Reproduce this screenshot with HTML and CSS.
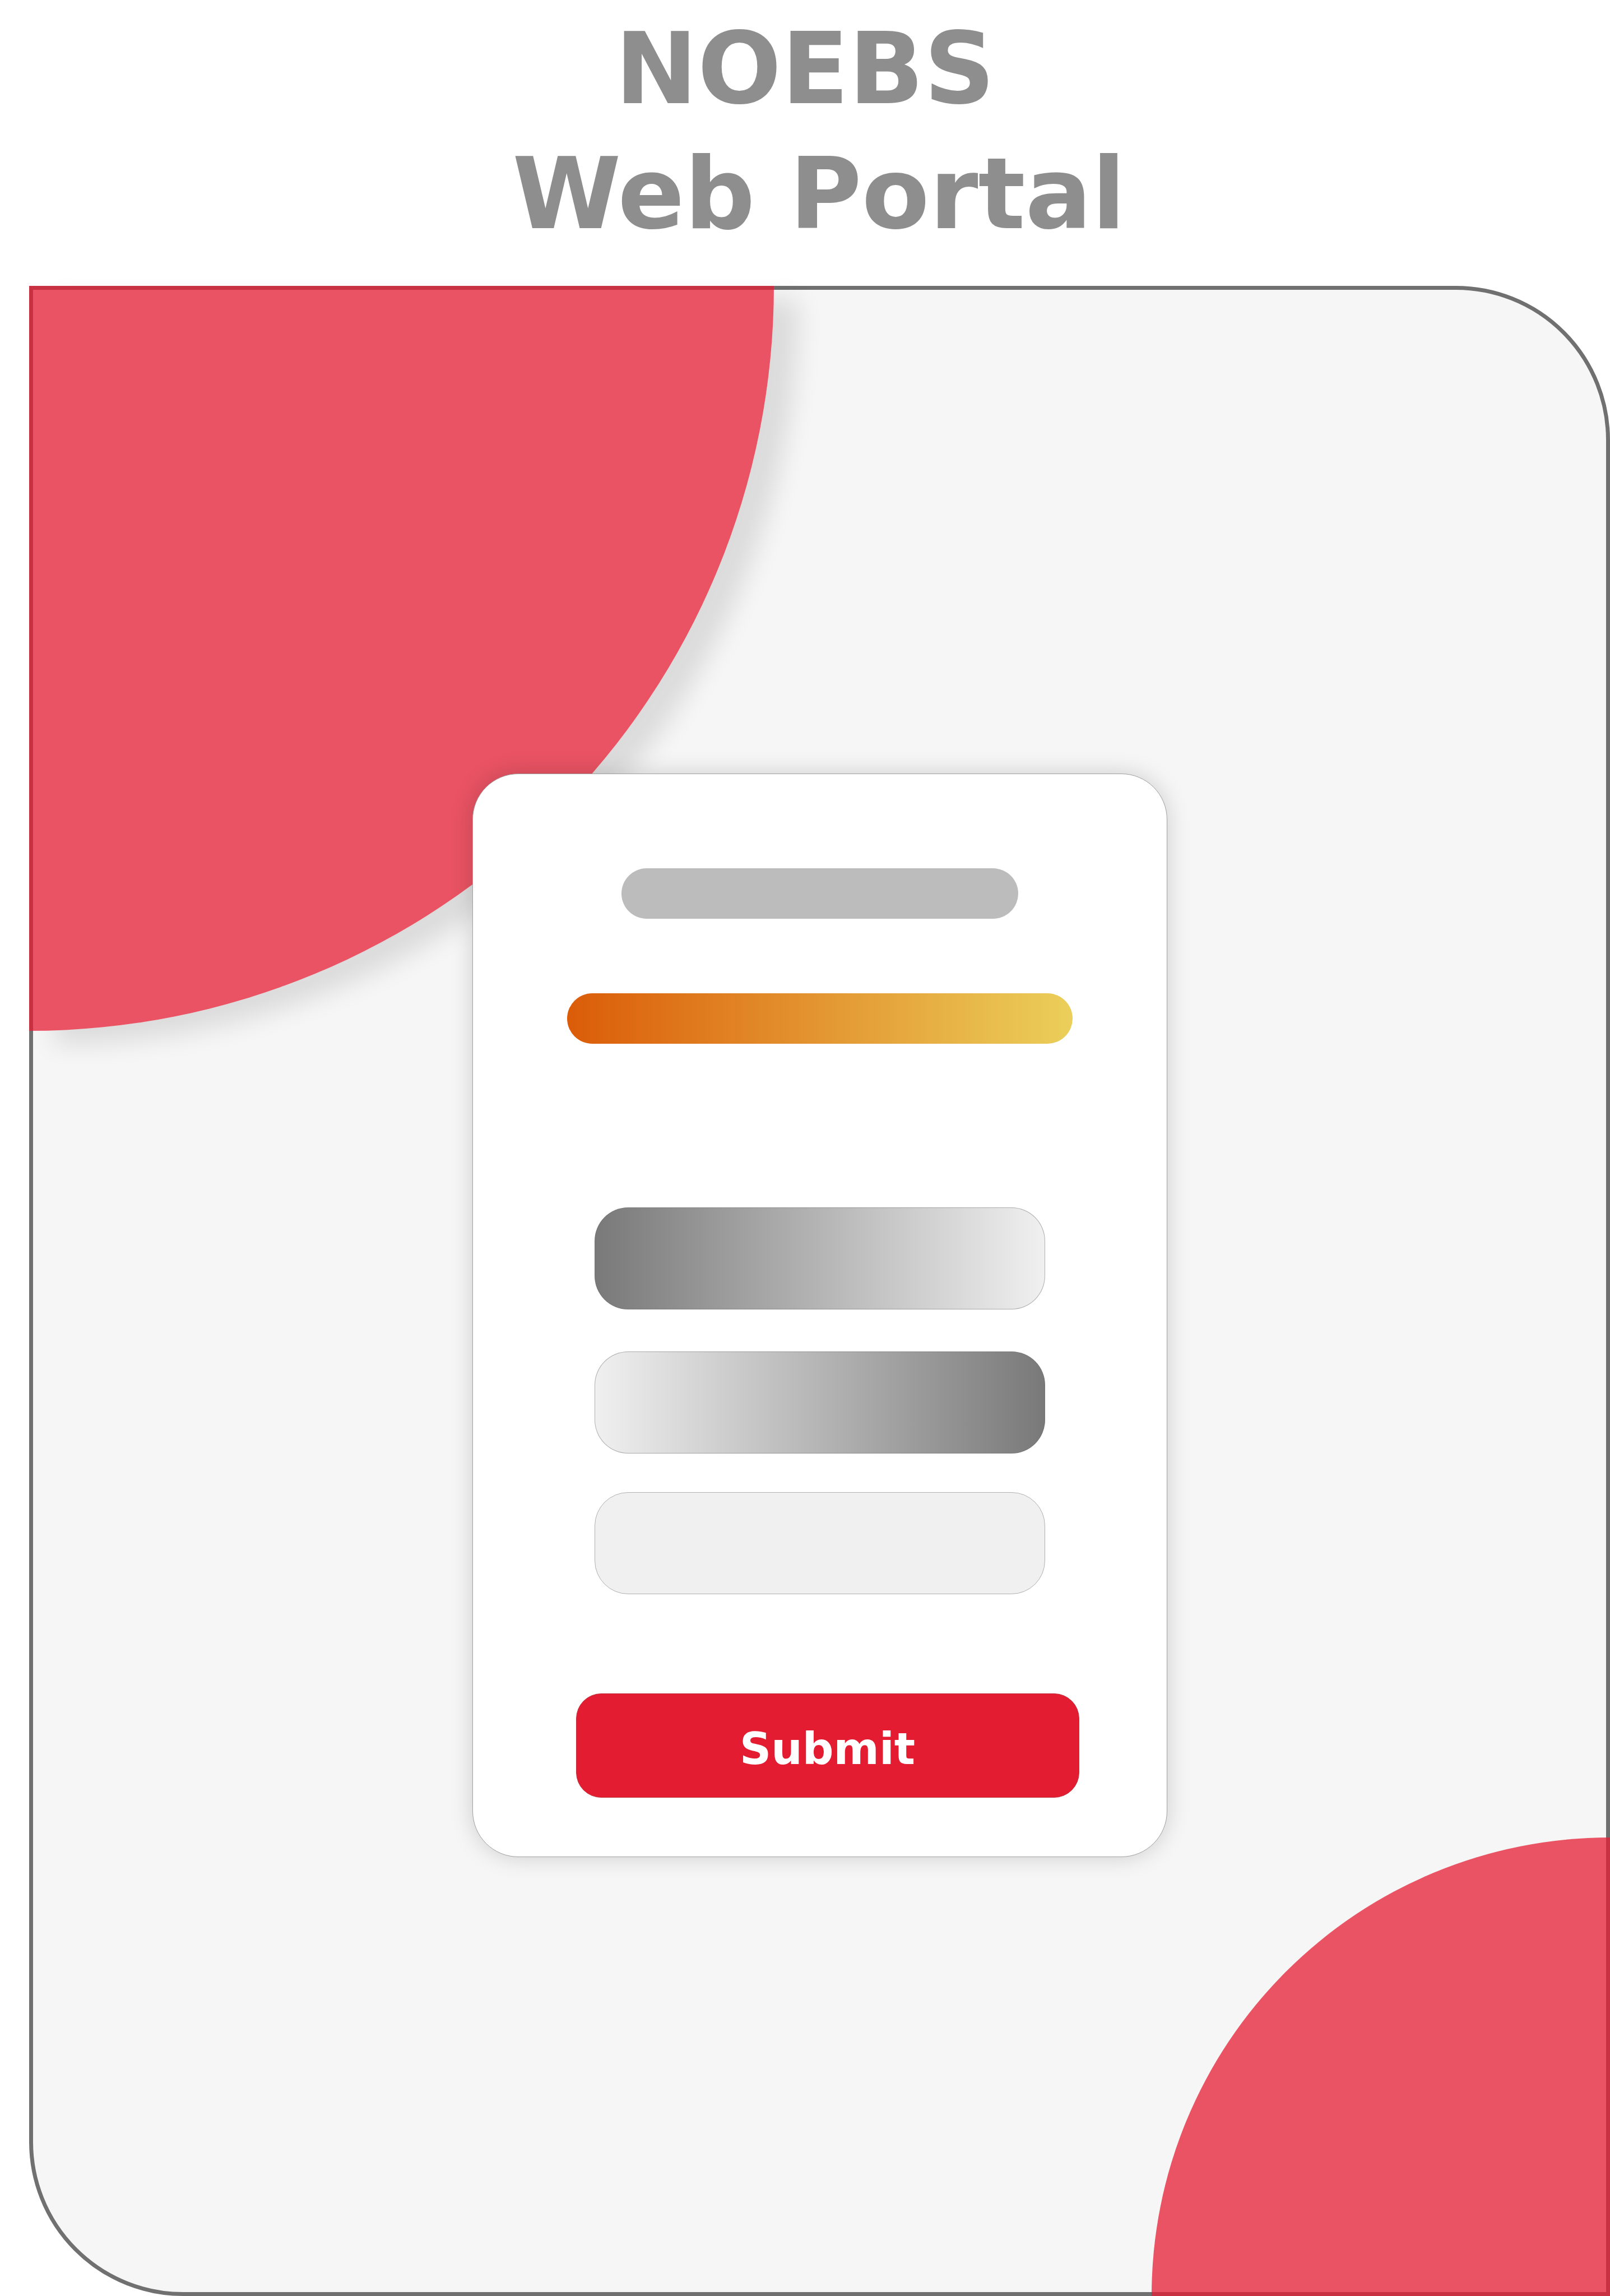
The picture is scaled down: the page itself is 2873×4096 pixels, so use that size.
FILE: index.html
```html
<!DOCTYPE html>
<html lang="en">
<head>
<meta charset="utf-8">
<title>NOEBS Web Portal</title>
<link rel="stylesheet" href="styles.css">
</head>
<body>
<header class="heading">
  <h1 class="title"><span class="title-line">NOEBS</span><span class="title-line title-sub">Web Portal</span></h1>
</header>
<main class="panel">
  <div class="arc arc-top"></div>
  <div class="arc arc-bottom"></div>
  <form class="card">
    <div class="bar bar-plain"></div>
    <div class="bar bar-accent"></div>
    <div class="fields">
      <input class="field field-fade-right" type="text" aria-label="First field">
      <input class="field field-fade-left" type="text" aria-label="Second field">
      <input class="field" type="text" aria-label="Third field">
    </div>
    <button class="submit" type="button">Submit</button>
  </form>
</main>
</body>
</html>
```
FILE: styles.css
```css
* {
  box-sizing: border-box;
}

body {
  margin: 0;
  min-height: 100vh;
  display: flex;
  flex-direction: column;
  background: #fff;
  font-family: "DejaVu Sans", Verdana, sans-serif;
}

.heading {
  padding: 12px 0 52px;
}

.title {
  margin: 0;
  font-size: 176px;
  line-height: 223px;
  font-weight: 700;
  color: #8e8e8e;
  text-align: center;
}

.title-line {
  display: block;
}

.title-sub {
  padding-left: 50px;
}

.panel {
  position: relative;
  flex: 1;
  display: flex;
  justify-content: center;
  align-items: flex-start;
  margin-left: 52px;
  padding: 863px 0 770px;
  border: 7px solid #707070;
  border-radius: 0 275px 0 275px;
  background: #f6f6f6;
}

.arc {
  position: absolute;
  background: rgba(228, 28, 49, 0.75);
}

.arc-top {
  top: -7px;
  left: -7px;
  width: 1329px;
  height: 1329px;
  border-radius: 0 0 100% 0;
  box-shadow: 44px 24px 46px rgba(0, 0, 0, 0.11);
}

.arc-bottom {
  right: -7px;
  bottom: -7px;
  width: 818px;
  height: 818px;
  border-radius: 100% 0 0 0;
}

.card {
  position: relative;
  display: flex;
  flex-direction: column;
  align-items: center;
  width: 100%;
  max-width: 1240px;
  padding: 168px 0 105px;
  border: 1px solid #a0a0a0;
  border-radius: 82px;
  background: #fff;
  box-shadow: 0 0 40px rgba(0, 0, 0, 0.17);
}

.bar {
  height: 90px;
  border-radius: 45px;
}

.bar-plain {
  width: 708px;
  background: #bcbcbc;
}

.bar-accent {
  width: 902px;
  margin-top: 133px;
  background: linear-gradient(90deg, #db5c09, #ebcf5b);
}

.fields {
  display: flex;
  flex-direction: column;
  gap: 69px;
  width: 804px;
  margin-top: 292px;
}

.field {
  width: 100%;
  height: 182px;
  padding: 0 60px;
  border: 1px solid #b0b0b0;
  border-radius: 60px;
  background: #f0f0f0;
  font: inherit;
  font-size: 78px;
}

.field-fade-right {
  margin-bottom: 6px;
  border-color: rgba(112, 112, 112, 0.5);
  background: linear-gradient(90deg, #797979, #f0f0f0) border-box;
}

.field-fade-left {
  border-color: rgba(112, 112, 112, 0.5);
  background: linear-gradient(90deg, #f0f0f0, #797979) border-box;
}

.submit {
  width: 898px;
  height: 186px;
  margin: 177px 0 0 28px;
  padding: 12px 0 0;
  border: 1px solid #c0303c;
  border-radius: 45px;
  background: #e41c31;
  color: #fff;
  font: inherit;
  font-size: 78px;
  font-weight: 700;
}
```
